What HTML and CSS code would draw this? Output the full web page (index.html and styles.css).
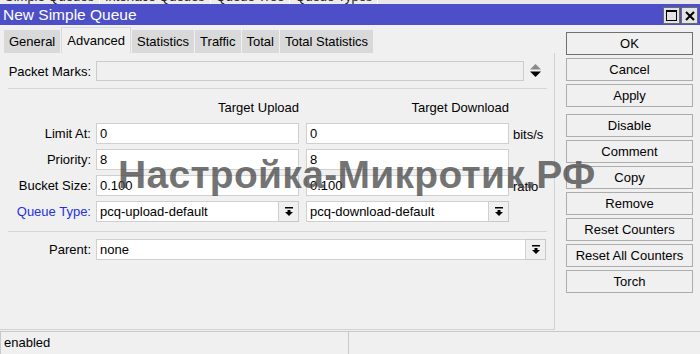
FILE: index.html
```html
<!DOCTYPE html>
<html>
<head>
<meta charset="utf-8">
<link rel="stylesheet" href="styles.css">
</head>
<body>
<div class="bgtabs">
  <span class="bgtab">Simple Queues</span>
  <span class="bgtab">Interface Queues</span>
  <span class="bgtab">Queue Tree</span>
  <span class="bgtab">Queue Types</span>
</div>
<div class="titlebar">
  <span class="title">New Simple Queue</span>
  <div class="winbtns">
    <span class="winbtn"><svg width="11" height="11" viewBox="0 0 11 11"><rect x="0.5" y="0.5" width="10" height="10" fill="none" stroke="#000"/><rect x="0" y="0" width="11" height="2" fill="#000"/></svg></span>
    <span class="winbtn"><svg width="10" height="10" viewBox="0 0 10 10"><path d="M1 1L9 9M9 1L1 9" stroke="#000" stroke-width="2"/></svg></span>
  </div>
</div>
<div class="main">
  <div class="left">
    <div class="tabs">
      <span class="tab">General</span>
      <span class="tab active">Advanced</span>
      <span class="tab">Statistics</span>
      <span class="tab">Traffic</span>
      <span class="tab">Total</span>
      <span class="tab">Total Statistics</span>
    </div>
    <div class="panel">
      <div class="row pm-row">
        <span class="lbl">Packet Marks:</span>
        <div class="field pm-field"></div>
        <svg class="updown" width="11" height="14" viewBox="0 0 11 14"><path d="M5.5 0L11 5.5H0Z" fill="#8a8a8a"/><path d="M0 7.5H11L5.5 13Z" fill="#000"/></svg>
      </div>
      <div class="sep"></div>
      <div class="grid">
        <span></span>
        <span class="colhead">Target Upload</span>
        <span class="colhead">Target Download</span>
        <span></span>

        <span class="lbl">Limit At:</span>
        <div class="field">0</div>
        <div class="field">0</div>
        <span class="unit">bits/s</span>

        <span class="lbl">Priority:</span>
        <div class="field">8</div>
        <div class="field">8</div>
        <span></span>

        <span class="lbl">Bucket Size:</span>
        <div class="field">0.100</div>
        <div class="field">0.100</div>
        <span class="unit">ratio</span>

        <span class="lbl blue">Queue Type:</span>
        <div class="combo"><div class="field">pcq-upload-default</div><span class="ddbtn"><svg width="8" height="9" viewBox="0 0 8 9"><rect x="0" y="0" width="8" height="1.5"/><path d="M2.5 3H5.5V5H8L4 9L0 5H2.5Z"/></svg></span></div>
        <div class="combo"><div class="field">pcq-download-default</div><span class="ddbtn"><svg width="8" height="9" viewBox="0 0 8 9"><rect x="0" y="0" width="8" height="1.5"/><path d="M2.5 3H5.5V5H8L4 9L0 5H2.5Z"/></svg></span></div>
        <span></span>
      </div>
      <div class="sep sep2"></div>
      <div class="row parent-row">
        <span class="lbl">Parent:</span>
        <div class="combo parent-combo"><div class="field">none</div><span class="ddbtn"><svg width="8" height="9" viewBox="0 0 8 9"><rect x="0" y="0" width="8" height="1.5"/><path d="M2.5 3H5.5V5H8L4 9L0 5H2.5Z"/></svg></span></div>
      </div>
    </div>
  </div>
  <div class="buttons">
    <span class="btn ok">OK</span>
    <span class="btn">Cancel</span>
    <span class="btn">Apply</span>
    <span class="btn spaced">Disable</span>
    <span class="btn">Comment</span>
    <span class="btn">Copy</span>
    <span class="btn">Remove</span>
    <span class="btn">Reset Counters</span>
    <span class="btn">Reset All Counters</span>
    <span class="btn">Torch</span>
  </div>
</div>
<div class="status">
  <div class="seg seg1">enabled</div>
  <div class="seg seg2"></div>
</div>
<div class="watermark">Настройка-Микротик.РФ</div>
</body>
</html>
```

FILE: styles.css
```css
body {
  margin: 0;
  width: 700px;
  height: 354px;
  overflow: hidden;
  background: #f0f0f0;
  font: 13px "Liberation Sans", Arial, sans-serif;
  color: #000;
  position: relative;
}

.bgtabs {
  height: 4px;
  overflow: hidden;
  display: flex;
  align-items: flex-end;
  background: #e9e9e9;
}
.bgtab {
  flex: none;
  height: 14px;
  line-height: 14px;
  padding: 0 5px;
  border-right: 1px solid #fff;
  color: #222;
  background: #ececec;
}

.titlebar {
  height: 21px;
  background: #4c4fc8;
  color: #fff;
  display: flex;
  align-items: center;
  justify-content: space-between;
  padding: 0 2px 0 3px;
}
.title { font-size: 15.5px; }
.winbtns {
  display: flex;
  gap: 1px;
  align-self: flex-start;
  margin-top: 3px;
}
.winbtn {
  width: 17px;
  height: 17px;
  box-sizing: border-box;
  border: 1px solid #6b6b6b;
  background: #e3e3e3;
  display: flex;
  align-items: center;
  justify-content: center;
}

.main {
  display: flex;
  height: 306px;
}
.left {
  width: 555px;
  display: flex;
  flex-direction: column;
}
.tabs {
  display: flex;
  align-items: flex-end;
  gap: 1px;
  height: 28px;
  box-sizing: border-box;
  padding: 2px 0 0 4px;
}
.tab {
  height: 23px;
  line-height: 23px;
  padding: 0 5px;
  background: #d9d9d9;
  white-space: nowrap;
}
.tab.active {
  height: 26px;
  line-height: 25px;
  background: #f0f0f0;
  border: 1px solid #dadada;
  border-bottom: none;
  box-sizing: border-box;
}

.panel {
  flex: 1;
  margin-bottom: 1px;
  border-right: 1px solid #d2d2d2;
  border-bottom: 1px solid #d2d2d2;
  padding-top: 8px;
  box-sizing: border-box;
}
.row {
  display: flex;
  align-items: center;
}
.lbl {
  width: 96px;
  flex: none;
  box-sizing: border-box;
  padding-right: 5px;
  text-align: right;
  white-space: nowrap;
  line-height: 21px;
}
.blue { color: #2430e0; }

.field {
  height: 21px;
  box-sizing: border-box;
  border: 1px solid #d0d0d0;
  background: #fff;
  line-height: 19px;
  padding-left: 3px;
  white-space: nowrap;
  overflow: hidden;
}
.pm-row { height: 20px; }
.pm-field {
  width: 428px;
  height: 20px;
  background: #f0f0f0;
  border-color: #cbcbcb;
}
.updown { margin-left: 6px; }

.sep {
  border-top: 1px solid #d6d6d6;
  margin: 7px 7px 0 8px;
}
.sep2 { margin-top: 9px; }

.grid {
  display: grid;
  grid-template-columns: 96px 210px 207px 1fr;
  grid-template-rows: 18px repeat(4, 21px);
  row-gap: 5px;
  margin-top: 11px;
}
.grid .field { width: 203px; }
.colhead {
  width: 203px;
  text-align: right;
  line-height: 15px;
}
.unit {
  line-height: 21px;
  padding-top: 1px;
}

.combo {
  display: flex;
  width: 203px;
  height: 21px;
}
.grid .combo .field,
.combo .field {
  flex: 1;
  width: auto;
}
.ddbtn {
  width: 20px;
  flex: none;
  height: 21px;
  box-sizing: border-box;
  border: 1px solid #c8c8c8;
  border-left: none;
  background: #f0f0f0;
  display: flex;
  align-items: center;
  justify-content: center;
}
.parent-row { margin-top: 7px; }
.parent-combo { width: 450px; }

.buttons {
  display: flex;
  flex-direction: column;
  gap: 3px;
  padding: 7px 0 0 11px;
}
.btn {
  width: 127px;
  height: 23px;
  box-sizing: border-box;
  border: 1px solid #adadad;
  background: #f0f0f0;
  text-align: center;
  line-height: 21px;
  white-space: nowrap;
}
.btn.ok { border-color: #707070; }
.btn.spaced { margin-top: 4px; }

.status {
  display: flex;
  height: 23px;
}
.seg {
  border-top: 1px solid #c8c8c8;
  border-left: 1px solid #c8c8c8;
  line-height: 22px;
}
.seg1 {
  width: 344px;
  padding-left: 3px;
}
.seg2 { flex: 1; }

.watermark {
  position: absolute;
  left: 118px;
  top: 153px;
  font: bold 39px "Liberation Sans", Arial, sans-serif;
  letter-spacing: 0.3px;
  color: rgba(70, 70, 70, 0.76);
  white-space: nowrap;
  pointer-events: none;
}
```
